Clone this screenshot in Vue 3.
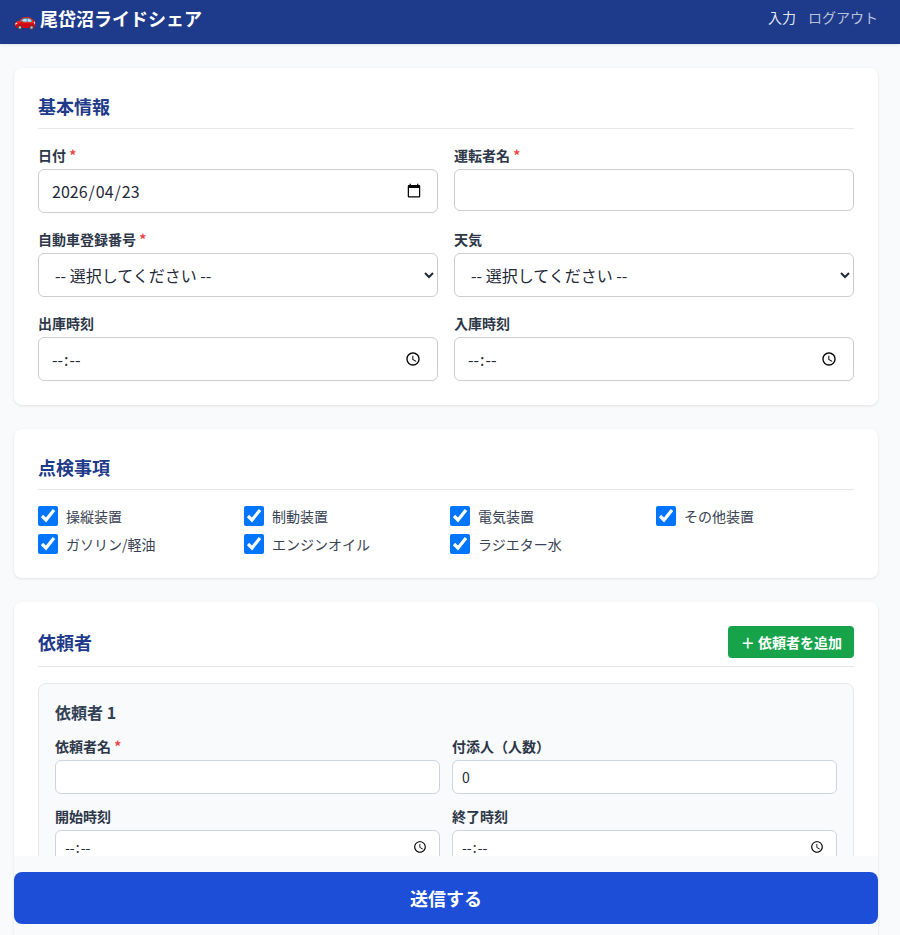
<script setup>
const checks = [
  "操縦装置",
  "制動装置",
  "電気装置",
  "その他装置",
  "ガソリン/軽油",
  "エンジンオイル",
  "ラジエター水"
];
</script>

<template>
  <div lang="ja">
    <header class="navbar">
      <div class="brand">🚗 尾岱沼ライドシェア</div>
      <nav class="nav-links">
        <a class="nav-link active">入力</a>
        <a class="nav-link">ログアウト</a>
      </nav>
    </header>

    <main class="page">
      <section class="card">
        <h2 class="section-title">基本情報</h2>
        <div class="form-grid">
          <div class="field">
            <label class="field-label">日付 <span class="required">*</span></label>
            <div class="date-wrap">
              <input class="field-input tall date-input" type="date" value="2026-04-23" />
              <span class="date-text"><span>2026</span>/<span>04</span>/<span>23</span></span>
            </div>
          </div>
          <div class="field">
            <label class="field-label">運転者名 <span class="required">*</span></label>
            <input class="field-input" type="text" />
          </div>
          <div class="field">
            <label class="field-label">自動車登録番号 <span class="required">*</span></label>
            <select class="field-input tall">
              <option>-- 選択してください --</option>
            </select>
          </div>
          <div class="field">
            <label class="field-label">天気</label>
            <select class="field-input tall">
              <option>-- 選択してください --</option>
            </select>
          </div>
          <div class="field">
            <label class="field-label">出庫時刻</label>
            <input class="field-input tall" type="time" />
          </div>
          <div class="field">
            <label class="field-label">入庫時刻</label>
            <input class="field-input tall" type="time" />
          </div>
        </div>
      </section>

      <section class="card">
        <h2 class="section-title">点検事項</h2>
        <div class="check-grid">
          <label v-for="item in checks" :key="item" class="check-item">
            <input type="checkbox" checked />
            <span>{{ item }}</span>
          </label>
        </div>
      </section>

      <section class="card requester-card">
        <div class="section-head">
          <h2 class="section-title bare">依頼者</h2>
          <button type="button" class="add-button">＋ 依頼者を追加</button>
        </div>
        <div class="sub-card">
          <h3 class="sub-title">依頼者 1</h3>
          <div class="sub-grid">
            <div class="field">
              <label class="field-label">依頼者名 <span class="required">*</span></label>
              <input class="field-input small" type="text" />
            </div>
            <div class="field">
              <label class="field-label">付添人（人数）</label>
              <input class="field-input small" type="number" value="0" />
            </div>
            <div class="field">
              <label class="field-label">開始時刻</label>
              <input class="field-input small" type="time" />
            </div>
            <div class="field">
              <label class="field-label">終了時刻</label>
              <input class="field-input small" type="time" />
            </div>
          </div>
        </div>
      </section>
    </main>

    <div class="submit-bar">
      <button type="button" class="submit-button">送信する</button>
    </div>
  </div>
</template>

<style>
html,
body {
  margin: 0;
  height: 935px;
  overflow: hidden;
  background: #f8fafc;
}
</style>

<style scoped>
* {
  box-sizing: border-box;
}

.navbar {
  display: flex;
  align-items: center;
  justify-content: space-between;
  height: 44px;
  padding: 0 22px 8px 14px;
  background: #1e3a8a;
  color: #ffffff;
  font-family: "Noto Sans CJK JP", "Noto Sans", sans-serif;
  box-shadow: 0 1px 3px rgba(0, 0, 0, 0.1);
}

.brand {
  font-size: 18px;
  font-weight: 700;
}

.nav-links {
  display: flex;
  gap: 12px;
  margin-bottom: 3px;
}

.nav-link {
  color: rgba(255, 255, 255, 0.7);
  font-size: 14px;
}

.nav-link.active {
  color: rgba(255, 255, 255, 0.9);
}

.page {
  display: flex;
  flex-direction: column;
  gap: 24px;
  padding: 24px 22px 100px 14px;
  font-family: "Noto Sans CJK JP", "Noto Sans", sans-serif;
}

.card {
  padding: 24px;
  border-radius: 8px;
  background: #ffffff;
  box-shadow: 0 1px 3px rgba(0, 0, 0, 0.1);
}

.requester-card {
  min-height: 400px;
}

.section-title {
  margin: 0 0 16px;
  padding-bottom: 8px;
  border-bottom: 1px solid #e5e7eb;
  color: #1e3a8a;
  font-size: 18px;
  font-weight: 700;
  line-height: 28px;
}

.section-title.bare {
  margin: 0;
  padding: 0;
  border: 0;
}

.section-head {
  display: flex;
  align-items: center;
  justify-content: space-between;
  margin-bottom: 16px;
  padding-bottom: 8px;
  border-bottom: 1px solid #e5e7eb;
}

.form-grid {
  display: grid;
  grid-template-columns: 1fr 1fr;
  gap: 16px;
  align-items: start;
}

.field {
  display: flex;
  flex-direction: column;
  min-width: 0;
}

.field-label {
  margin-bottom: 4px;
  color: #2d3748;
  font-size: 14px;
  font-weight: 600;
  line-height: 20px;
}

.required {
  color: #ef4444;
}

.field-input {
  width: 100%;
  height: 42px;
  padding: 0 12px;
  border: 1px solid #cccccc;
  border-radius: 6px;
  background: #ffffff;
  color: #1f2937;
  font-family: inherit;
  font-size: 16px;
}

.field-input.tall {
  height: 44px;
}

.field-input.small {
  height: 34px;
  padding: 0 8px;
  border-color: #cbd5e1;
  font-size: 14px;
}

.field-input[type="number"].small {
  padding: 0 9px;
}

/* browser locale prints 12h time, the screenshot has 24h */
.field-input::-webkit-datetime-edit-ampm-field {
  display: none;
}

.date-wrap {
  position: relative;
  display: flex;
}

.field-input.date-input {
  padding-right: 13px;
}

.date-input::-webkit-datetime-edit {
  visibility: hidden;
}

.date-text {
  position: absolute;
  top: 0;
  bottom: 0;
  left: 13px;
  display: flex;
  align-items: center;
  color: #1f2937;
  font-size: 16px;
  pointer-events: none;
}

.date-text span {
  padding: 0 1px;
}

.check-grid {
  display: grid;
  grid-template-columns: repeat(4, 1fr);
  gap: 8px;
}

.check-item {
  display: flex;
  align-items: center;
  gap: 8px;
  color: #374151;
  font-size: 14px;
  line-height: 20px;
}

.check-item input {
  width: 20px;
  height: 20px;
  margin: 0;
}

.add-button {
  height: 32px;
  padding: 0 12px 0 13px;
  border: 0;
  border-radius: 4px;
  background: #16a34a;
  color: #ffffff;
  font-family: inherit;
  font-size: 14px;
  font-weight: 600;
}

.sub-card {
  padding: 16px;
  border: 1px solid #e5e7eb;
  border-radius: 8px;
  background: #f8fafc;
}

.sub-title {
  margin: 0 0 12px;
  color: #334155;
  font-size: 16px;
  font-weight: 700;
  line-height: 24px;
}

.sub-grid {
  display: grid;
  grid-template-columns: 1fr 1fr;
  gap: 12px;
}

.submit-bar {
  position: fixed;
  left: 14px;
  right: 22px;
  bottom: 0;
  height: 79px;
  padding: 16px 0 11px;
  background: #f8fafc;
}

.submit-button {
  width: 100%;
  height: 52px;
  border: 0;
  border-radius: 8px;
  background: #1d4ed8;
  color: #ffffff;
  font-family: "Noto Sans CJK JP", "Noto Sans", sans-serif;
  font-size: 18px;
  font-weight: 700;
}
</style>
